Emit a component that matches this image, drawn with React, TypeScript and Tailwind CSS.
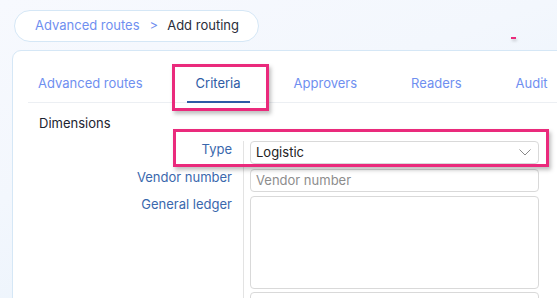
import React from "react";

const tabs = ["Advanced routes", "Criteria", "Approvers", "Readers", "Audit"];

const App = () => {
  return (
    <div className="relative h-[298px] w-[557px] overflow-hidden bg-[linear-gradient(160deg,#f7f9fe_0%,#f3f7fd_40%,#e6f1fb_100%)] font-['Inter',sans-serif] text-[13px]">
      <div className="pl-[14px] pt-[10px]">
        <div className="flex h-[32px] w-[245px] items-center rounded-full border border-[#d5e7f6] bg-white pl-[20px]">
          <span className="text-[#6f8ff0]">Advanced routes</span>
          <span className="ml-[10px] text-[#6f8ff0]">&gt;</span>
          <span className="ml-[9px] text-[#2a2d3a]">Add routing</span>
        </div>
      </div>

      <div className="ml-[12px] mt-[8px] h-[260px] w-[560px] rounded-tl-[9px] border border-[#d5e7f6] bg-white pt-[22px]">
        <div className="ml-[15px] flex gap-[34px] border-b border-[#eceff3]">
          {tabs.map((tab) => (
            <div
              key={tab}
              className={
                tab === "Criteria"
                  ? "-mb-px border-b-2 border-[#2e5ca5] px-[9px] pb-[8px] leading-[20px] text-[#2e5ca5]"
                  : "-mb-px border-b-2 border-transparent px-[10px] pb-[8px] leading-[20px] text-[#6f8ff0]"
              }
            >
              {tab}
            </div>
          ))}
        </div>

        <div className="pl-[26px] pt-[10px] leading-[20px] text-[#1c2330]">
          Dimensions
        </div>

        <div className="ml-[15px] mt-[8px] flex flex-col">
          <div className="flex">
            <div className="w-[216px] border-r border-[#e3e3e3] pb-[5px] pr-[11px] text-right leading-[16px] text-[#3a68ad]">
              Type
            </div>
            <div className="pb-[5px] pl-[6px]">
              <div className="flex h-[23px] w-[289px] items-center justify-between rounded-[4px] border border-[#d9d9d9] pl-[5px] pr-[7px] text-[#222]">
                <span>Logistic</span>
                <svg width="12" height="7" viewBox="0 0 12 7" fill="none">
                  <polyline points="0.5,0.5 6,6 11.5,0.5" stroke="#8a8a8a" strokeWidth="1" />
                </svg>
              </div>
            </div>
          </div>
          <div className="flex">
            <div className="w-[216px] border-r border-[#e3e3e3] pb-[4px] pr-[11px] text-right leading-[16px] text-[#3a68ad]">
              Vendor number
            </div>
            <div className="pb-[4px] pl-[6px]">
              <div className="flex h-[23px] w-[289px] items-center rounded-[4px] border border-[#d9d9d9] pl-[5px] text-[#8d8d8d]">
                Vendor number
              </div>
            </div>
          </div>
          <div className="flex">
            <div className="w-[216px] border-r border-[#e3e3e3] pb-[3px] pr-[11px] text-right leading-[16px] text-[#3a68ad]">
              General ledger
            </div>
            <div className="pb-[3px] pl-[6px]">
              <div className="h-[93px] w-[289px] rounded-[4px] border border-[#d9d9d9]" />
            </div>
          </div>
          <div className="flex">
            <div className="w-[216px] border-r border-[#e3e3e3] pb-[3px]" />
            <div className="pl-[6px]">
              <div className="h-[23px] w-[289px] rounded-[4px] border border-[#d9d9d9]" />
            </div>
          </div>
        </div>
      </div>

      <div className="absolute left-[172px] top-[64px] h-[47px] w-[97px] border-[3px] border-[#ea2a7c] shadow-[2px_3px_4px_rgba(0,0,0,0.25)]" />
      <div className="absolute left-[173px] top-[129px] h-[38px] w-[376px] border-[3px] border-[#ea2a7c] shadow-[2px_3px_4px_rgba(0,0,0,0.25)]" />
      <div className="absolute left-[511px] top-[37px] h-[2px] w-[5px] bg-[#ea2a7c] shadow-[1px_2px_3px_rgba(0,0,0,0.2)]" />
    </div>
  );
};

export default App;
